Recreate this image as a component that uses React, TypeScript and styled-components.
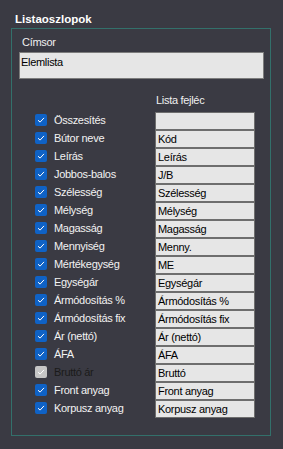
import React from "react";
import styled, { createGlobalStyle } from "styled-components";

const BG = "#3a3a43";

const GlobalStyle = createGlobalStyle`
  html, body {
    margin: 0;
    padding: 0;
    background: ${BG};
  }
  body {
    font-family: "Liberation Sans", Arial, sans-serif;
    color: #f2f2f2;
  }
`;

const Page = styled.div`
  width: 283px;
  height: 449px;
  background: ${BG};
  padding-top: 12px;
  box-sizing: border-box;
`;

const Title = styled.div`
  margin-left: 15px;
  font-size: 11.5px;
  font-weight: bold;
  line-height: 14px;
  height: 16px;
  color: #ffffff;
`;

const Group = styled.div`
  margin-left: 11px;
  width: 260px;
  height: 408px;
  box-sizing: border-box;
  border: 1px solid #33706b;
  padding: 7px 6px 0 7px;
`;

const Label = styled.div`
  font-size: 11px;
  letter-spacing: -0.3px;
  line-height: 13px;
  margin-left: 3px;
  color: #f0f0f0;
`;

const TitleBox = styled.div`
  margin-top: 3px;
  height: 27px;
  box-sizing: border-box;
  background: #e6e6e6;
  border: 1px solid #7c7c7c;
  color: #000;
  font-size: 11px;
  letter-spacing: -0.3px;
  line-height: 13px;
  padding: 3px 0 0 1px;
`;

const HeaderRow = styled.div`
  margin-top: 15px;
  padding-left: 137px;
  font-size: 11px;
  letter-spacing: -0.3px;
  line-height: 13px;
  color: #f0f0f0;
`;

const Rows = styled.div`
  margin-top: 5px;
  margin-left: 16px;
  display: grid;
  grid-template-columns: 120px 100px;
  grid-auto-rows: 18px;
`;

const CheckCell = styled.label<{ $disabled?: boolean }>`
  display: flex;
  align-items: center;
  gap: 7px;
  height: 16px;
  font-size: 11px;
  letter-spacing: -0.3px;
  color: ${(p) => (p.$disabled ? "#1a1a1a" : "#f2f2f2")};
  white-space: nowrap;
`;

const Box = styled.span<{ $disabled?: boolean }>`
  display: flex;
  align-items: center;
  justify-content: center;
  width: 12px;
  height: 12px;
  border-radius: 2px;
  background: ${(p) => (p.$disabled ? "#c6c6c6" : "#0f62c6")};
  flex-shrink: 0;
`;

const Field = styled.div`
  box-sizing: border-box;
  height: 18px;
  background: #e6e6e6;
  border: 1px solid #6e6e6e;
  color: #000;
  font-size: 11px;
  letter-spacing: -0.3px;
  line-height: 16px;
  padding-left: 2px;
  white-space: nowrap;
  overflow: hidden;
`;

const Check = () => (
  <svg width="8" height="8" viewBox="0 0 8 8">
    <path d="M1 4.2 L3.1 6.1 L7 1.9" fill="none" stroke="#ffffff" strokeWidth="1" />
  </svg>
);

const columns: { label: string; header: string; disabled?: boolean }[] = [
  { label: "Összesítés", header: "" },
  { label: "Bútor neve", header: "Kód" },
  { label: "Leírás", header: "Leírás" },
  { label: "Jobbos-balos", header: "J/B" },
  { label: "Szélesség", header: "Szélesség" },
  { label: "Mélység", header: "Mélység" },
  { label: "Magasság", header: "Magasság" },
  { label: "Mennyiség", header: "Menny." },
  { label: "Mértékegység", header: "ME" },
  { label: "Egységár", header: "Egységár" },
  { label: "Ármódosítás %", header: "Ármódosítás %" },
  { label: "Ármódosítás fix", header: "Ármódosítás fix" },
  { label: "Ár (nettó)", header: "Ár (nettó)" },
  { label: "ÁFA", header: "ÁFA" },
  { label: "Bruttó ár", header: "Bruttó", disabled: true },
  { label: "Front anyag", header: "Front anyag" },
  { label: "Korpusz anyag", header: "Korpusz anyag" },
];

const App = () => {
  return (
    <>
      <GlobalStyle />
      <Page>
        <Title>Listaoszlopok</Title>
        <Group>
          <Label>Címsor</Label>
          <TitleBox>Elemlista</TitleBox>
          <HeaderRow>Lista fejléc</HeaderRow>
          <Rows>
            {columns.map((c) => (
              <React.Fragment key={c.label}>
                <CheckCell $disabled={c.disabled}>
                  <Box $disabled={c.disabled}>
                    <Check />
                  </Box>
                  {c.label}
                </CheckCell>
                <Field>{c.header}</Field>
              </React.Fragment>
            ))}
          </Rows>
        </Group>
      </Page>
    </>
  );
};

export default App;
